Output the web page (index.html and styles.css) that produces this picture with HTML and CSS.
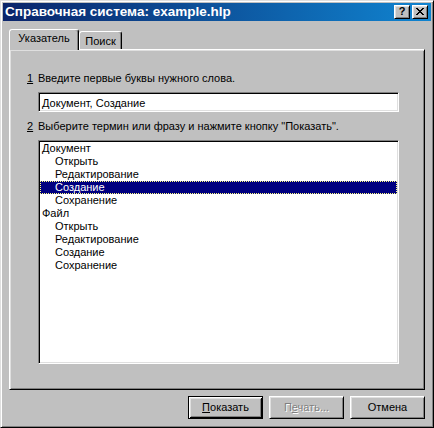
FILE: index.html
```html
<!DOCTYPE html>
<html lang="ru">
<head>
<meta charset="utf-8">
<title>Справочная система: example.hlp</title>
<link rel="stylesheet" href="styles.css">
</head>
<body>
<div class="window">
  <div class="titlebar">
    <span class="title">Справочная система: example.hlp</span>
    <div class="tbtns">
      <div class="tb"><span class="q">?</span></div>
      <div class="tb">
        <svg width="8" height="7" viewBox="0 0 8 7" shape-rendering="crispEdges"><path fill="#000" d="M0 0h2v1h-2z M6 0h2v1h-2z M1 1h2v1h-2z M5 1h2v1h-2z M2 2h4v1h-4z M3 3h2v1h-2z M2 4h4v1h-4z M1 5h2v1h-2z M5 5h2v1h-2z M0 6h2v1h-2z M6 6h2v1h-2z"/></svg>
      </div>
    </div>
  </div>
  <div class="content">
    <div class="tabs">
      <div class="tab active">Указатель</div>
      <div class="tab">Поиск</div>
    </div>
    <div class="panel">
      <div class="row label1"><span class="num"><u>1</u></span><span>Введите первые буквы нужного слова.</span></div>
      <div class="row"><span></span><div class="input">Документ, Создание</div></div>
      <div class="row label2"><span class="num"><u>2</u></span><span>Выберите термин или фразу и нажмите кнопку "Показать".</span></div>
      <div class="row"><span></span>
        <div class="list">
          <div class="item">Документ</div>
          <div class="item sub">Открыть</div>
          <div class="item sub">Редактирование</div>
          <div class="item sub selected">Создание</div>
          <div class="item sub">Сохранение</div>
          <div class="item">Файл</div>
          <div class="item sub">Открыть</div>
          <div class="item sub">Редактирование</div>
          <div class="item sub">Создание</div>
          <div class="item sub">Сохранение</div>
        </div>
      </div>
    </div>
    <div class="buttons">
      <div class="btn default"><span><u>П</u>оказать</span></div>
      <div class="btn disabled"><span>П<u>е</u>чать...</span></div>
      <div class="btn"><span>Отмена</span></div>
    </div>
  </div>
</div>
</body>
</html>
```
FILE: styles.css
```css
* { box-sizing: border-box; }
html, body { margin: 0; padding: 0; }
body {
  width: 434px;
  height: 428px;
  overflow: hidden;
  background: #c0c0c0;
  font-family: "Liberation Sans", Arial, sans-serif;
  font-size: 11px;
  line-height: 13px;
  color: #000;
}
.window {
  width: 434px;
  height: 428px;
  border: 1px solid;
  border-color: #dfdfdf #000 #000 #dfdfdf;
  box-shadow: inset 1px 1px #fff, inset -1px -1px #808080;
  padding: 2px;
  display: flex;
  flex-direction: column;
  background: #c0c0c0;
}
.titlebar {
  height: 18px;
  flex: none;
  display: flex;
  align-items: center;
  padding: 0 3px 0 2px;
  background: linear-gradient(90deg, #0a246a 0%, #1084d0 100%);
  color: #fff;
}
.title {
  font-weight: bold;
  font-size: 13.5px;
  line-height: 16px;
  white-space: nowrap;
}
.tbtns {
  margin-left: auto;
  display: flex;
  gap: 2px;
}
.tb {
  width: 16px;
  height: 14px;
  background: #c0c0c0;
  border: 1px solid;
  border-color: #fff #000 #000 #fff;
  box-shadow: inset 1px 1px #dfdfdf, inset -1px -1px #808080;
  display: flex;
  align-items: center;
  justify-content: center;
}
.tb svg { display: block; margin-top: -1px; }
.q {
  color: #000;
  font-weight: bold;
  font-size: 11px;
  line-height: 11px;
  margin-top: -1px;
}
.content {
  flex: 1;
  display: flex;
  flex-direction: column;
  padding: 8px 6px 6px;
}
.tabs {
  height: 20px;
  display: flex;
  align-items: flex-end;
  position: relative;
  z-index: 1;
}
.tab {
  height: 18px;
  border: 1px solid;
  border-bottom: 0;
  border-color: #fff #000 transparent #fff;
  border-radius: 3px 3px 0 0;
  box-shadow: inset -1px 0 #808080;
  background: #c0c0c0;
  text-align: center;
  padding-top: 3px;
  width: 43px;
}
.tab.active {
  width: 70px;
  height: 21px;
  margin-bottom: -1px;
  padding-top: 2px;
}
.panel {
  height: 341px;
  border: 1px solid;
  border-color: #fff #000 #000 #fff;
  box-shadow: inset 1px 1px #dfdfdf, inset -1px -1px #808080;
  padding: 22px 25px 0 17px;
}
.row {
  display: grid;
  grid-template-columns: 11px 1fr;
}
.num { white-space: nowrap; }
.input {
  margin-top: 7px;
  height: 20px;
  background: #fff;
  border: 1px solid;
  border-color: #808080 #fff #fff #808080;
  box-shadow: inset 1px 1px #000, inset -1px -1px #dfdfdf;
  padding: 2px 3px 0;
  line-height: 16px;
}
.label2 { margin-top: 8px; }
.list {
  margin-top: 7px;
  height: 224px;
  background: #fff;
  border: 1px solid;
  border-color: #808080 #fff #fff #808080;
  box-shadow: inset 1px 1px #000, inset -1px -1px #dfdfdf;
  padding: 1px;
}
.item {
  height: 13px;
  line-height: 13px;
  padding-left: 2px;
  white-space: nowrap;
}
.item.sub { padding-left: 15px; }
.item.selected {
  background: #000080;
  color: #fff;
  outline: 1px dotted #ffff7f;
  outline-offset: -1px;
}
.buttons {
  margin-top: 6px;
  display: flex;
  justify-content: flex-end;
  gap: 6px;
}
.btn {
  width: 75px;
  height: 23px;
  border: 1px solid;
  border-color: #fff #000 #000 #fff;
  box-shadow: inset 1px 1px #dfdfdf, inset -1px -1px #808080;
  display: flex;
  align-items: center;
  justify-content: center;
}
.btn.default {
  border-color: #000;
  box-shadow: inset 1px 1px #fff, inset -1px -1px #000, inset 2px 2px #dfdfdf, inset -2px -2px #808080;
}
.btn.disabled {
  color: #808080;
  text-shadow: 1px 1px #fff;
}
```
